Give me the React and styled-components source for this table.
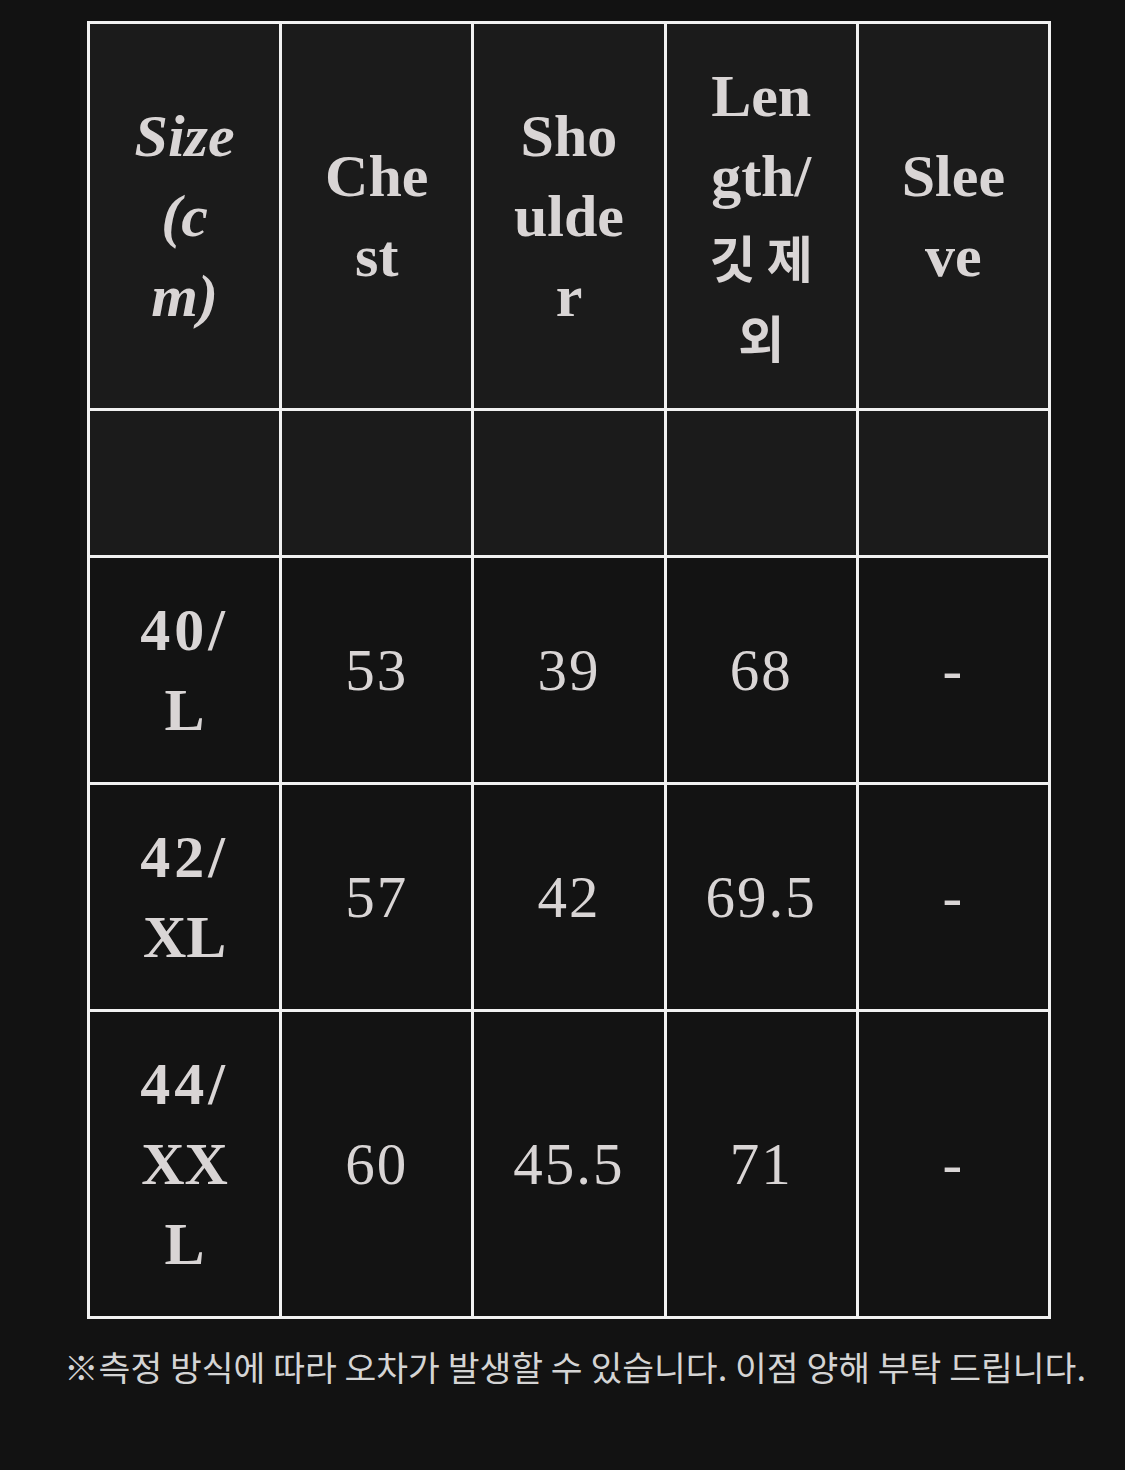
import React from 'react';
import styled, { createGlobalStyle } from 'styled-components';

const GlobalStyle = createGlobalStyle`
	html, body {
		margin: 0;
		padding: 0;
		background: #121212;
	}
`;

const Page = styled.div`
	width: 1125px;
	min-height: 1470px;
	background: #121212;
	padding: 21px 0 0 87px;
	box-sizing: border-box;
`;

const SizeTable = styled.table`
	width: 964px;
	table-layout: fixed;
	border-collapse: collapse;
	border: 3px solid #f1f1f1;
`;

const Cell = styled.td`
	border: 3px solid #f1f1f1;
	padding: 32px 0;
	text-align: center;
	vertical-align: middle;
	background: ${(p) => (p.$head ? '#1b1b1b' : '#131313')};
	color: #d9d5d5;
	font-family: 'Liberation Serif', 'Noto Sans CJK KR', serif;
	font-size: ${(p) => (p.$bold ? '60px' : '59px')};
	font-weight: ${(p) => (p.$bold ? 700 : 400)};
	font-style: ${(p) => (p.$italic ? 'italic' : 'normal')};
	letter-spacing: ${(p) => (p.$bold ? '0' : '2px')};
	line-height: 80px;
`;

const Line = styled.span`
	display: block;
	white-space: nowrap;
	letter-spacing: ${(p) => (p.$wide ? '4px' : 'inherit')};
`;

const HangulLine = styled(Line)`
	font-family: 'Noto Sans CJK KR', sans-serif;
	font-size: 50px;
	font-weight: 700;
`;

const Note = styled.p`
	margin: 24px 0 0 -23px;
	color: #d4d4d4;
	font-family: 'Noto Sans CJK KR', 'Noto Sans', sans-serif;
	font-size: 34.6px;
	line-height: 46px;
	white-space: nowrap;
`;

const headers = [
	{ lines: ['Size', '(c', 'm)'], italic: true },
	{ lines: ['Che', 'st'] },
	{ lines: ['Sho', 'ulde', 'r'] },
	{ lines: ['Len', 'gth/'], hangul: ['깃 제', '외'] },
	{ lines: ['Slee', 've'] },
];

const rows = [
	{ size: ['40/', 'L'], values: ['53', '39', '68', '-'] },
	{ size: ['42/', 'XL'], values: ['57', '42', '69.5', '-'] },
	{ size: ['44/', 'XX', 'L'], values: ['60', '45.5', '71', '-'] },
];

export default function App() {
	return (
		<Page>
			<GlobalStyle />
			<SizeTable>
				<tbody>
					<tr>
						{headers.map((h, i) => (
							<Cell key={i} $head $bold $italic={h.italic}>
								{h.lines.map((l, k) => (
									<Line key={k}>{l}</Line>
								))}
								{h.hangul &&
									h.hangul.map((l, k) => <HangulLine key={k}>{l}</HangulLine>)}
							</Cell>
						))}
					</tr>
					<tr>
						{headers.map((h, i) => (
							<Cell key={i} $head>
								<Line>&nbsp;</Line>
							</Cell>
						))}
					</tr>
					{rows.map((r, i) => (
						<tr key={i}>
							<Cell $bold>
								{r.size.map((l, k) => (
									<Line key={k} $wide={/\d/.test(l)}>
										{l}
									</Line>
								))}
							</Cell>
							{r.values.map((v, k) => (
								<Cell key={k}>{v}</Cell>
							))}
						</tr>
					))}
				</tbody>
			</SizeTable>
			<Note>※측정 방식에 따라 오차가 발생할 수 있습니다. 이점 양해 부탁 드립니다.</Note>
		</Page>
	);
}
